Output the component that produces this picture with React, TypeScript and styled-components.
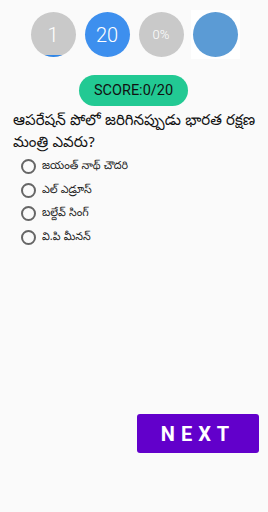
import React from "react";
import styled, { createGlobalStyle } from "styled-components";

const Global = createGlobalStyle`
  html, body { margin: 0; padding: 0; background: #fafafa; }
  body { font-family: Roboto, "Noto Sans", sans-serif; }
`;

const Page = styled.div`
  width: 268px;
  height: 512px;
  display: flex;
  flex-direction: column;
  box-sizing: border-box;
  background: #fafafa;
`;

const Stats = styled.div`
  display: flex;
  justify-content: center;
  align-items: center;
  gap: 9px;
  padding-top: 10px;
  padding-left: 2px;
`;

const Circle = styled.div<{ $bg: string; $size: number }>`
  position: relative;
  width: 45px;
  height: 45px;
  border-radius: 50%;
  background: ${(p) => p.$bg};
  color: #fff;
  display: flex;
  align-items: center;
  justify-content: center;
  font-size: ${(p) => p.$size}px;
  font-weight: 300;
  overflow: hidden;
`;

const Arc = styled.div`
  position: absolute;
  left: 13px;
  right: 13px;
  bottom: 0;
  height: 2px;
  border-radius: 2px 2px 0 0;
  background: #2f86e8;
`;

const WhiteBox = styled.div`
  width: 49px;
  height: 49px;
  background: #fff;
  display: flex;
  align-items: center;
  justify-content: center;
  margin-left: -2px;
`;

const ScoreRow = styled.div`
  display: flex;
  justify-content: center;
  margin-top: 16px;
  padding-right: 1px;
`;

const Score = styled.div`
  width: 109px;
  height: 31px;
  border-radius: 16px;
  background: #22c993;
  color: #111;
  font-size: 14.5px;
  display: flex;
  align-items: center;
  justify-content: center;
`;

const Question = styled.div`
  padding: 5px 4px 0 13px;
  font-family: "Noto Sans Telugu", "Noto Sans", sans-serif;
  font-size: 15px;
  line-height: 22px;
  color: #111;
`;

const Options = styled.div`
  display: flex;
  flex-direction: column;
  gap: 6.5px;
  padding: 3px 0 0 21px;
`;

const Option = styled.label`
  display: flex;
  align-items: center;
  gap: 6px;
  height: 17px;
  font-family: "Noto Sans Telugu", "Noto Sans", sans-serif;
  font-size: 11px;
  color: #222;
`;

const Radio = styled.span`
  width: 11px;
  height: 11px;
  border: 2px solid #666;
  border-radius: 50%;
  flex: none;
`;

const Spacer = styled.div`
  flex: 1;
`;

const Footer = styled.div`
  display: flex;
  justify-content: flex-end;
  padding: 0 9px 59px 0;
`;

const Next = styled.button`
  width: 122px;
  height: 39px;
  border: none;
  border-radius: 3px;
  background: #6200cb;
  color: #fff;
  font-family: Roboto, sans-serif;
  font-weight: 700;
  font-size: 20px;
  letter-spacing: 6px;
  padding-left: 6px;
`;

const options = ["జయంత్ నాథ్ చౌదరి", "ఎల్ ఎడ్రూస్", "బల్దేవ్ సింగ్", "వి.పి మీనన్"];

export default function App() {
  return (
    <Page>
      <Global />
      <Stats>
        <Circle $bg="#c9c9c9" $size={20}>
          1<Arc />
        </Circle>
        <Circle $bg="#3d8fee" $size={20}>20</Circle>
        <Circle $bg="#c9c9c9" $size={13}>0%</Circle>
        <WhiteBox>
          <Circle $bg="#5b9bd5" $size={13} />
        </WhiteBox>
      </Stats>
      <ScoreRow>
        <Score>SCORE:0/20</Score>
      </ScoreRow>
      <Question>ఆపరేషన్ పోలో జరిగినప్పుడు భారత రక్షణ మంత్రి ఎవరు?</Question>
      <Options>
        {options.map((o) => (
          <Option key={o}>
            <Radio />
            {o}
          </Option>
        ))}
      </Options>
      <Spacer />
      <Footer>
        <Next>NEXT</Next>
      </Footer>
    </Page>
  );
}
